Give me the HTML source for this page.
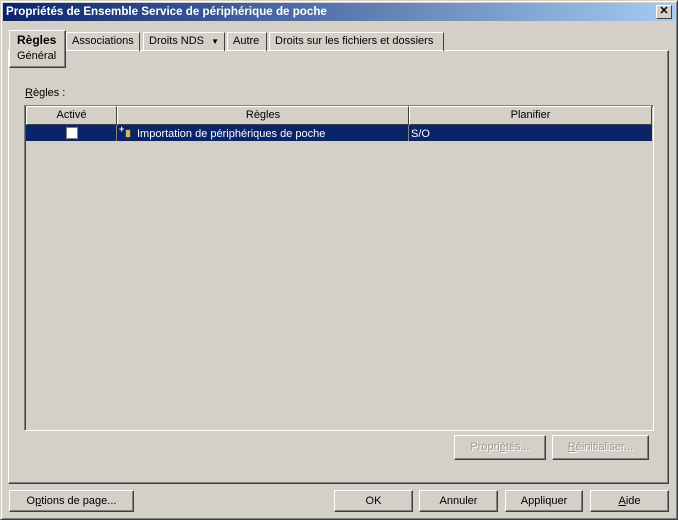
<!DOCTYPE html>
<html><head><meta charset="utf-8"><style>
*{margin:0;padding:0;box-sizing:border-box}
body{width:678px;height:520px;background:#d4d0c8;font-family:"Liberation Sans",sans-serif;font-size:11px;color:#000;position:relative;overflow:hidden}
.a{position:absolute}
.win{left:0;top:0;width:678px;height:520px;border:1px solid;border-color:#d4d0c8 #404040 #404040 #d4d0c8;box-shadow:inset 1px 1px #fff,inset -1px -1px #808080}
.title{left:3px;top:3px;width:672px;height:18px;background:linear-gradient(90deg,#0a246a,#a6caf0);color:#fff;font-weight:bold;font-size:11.6px;line-height:18px;padding-left:3px}
.x{left:656px;top:5px;width:16px;height:14px;background:#d4d0c8;border:1px solid;border-color:#fff #404040 #404040 #fff;font-size:11px;font-weight:bold;text-align:center;line-height:11px}
.btn{position:absolute;border:1px solid;border-color:#fff #404040 #404040 #fff;box-shadow:inset -1px -1px #808080;text-align:center;font-size:11px;line-height:20px}
.dis{color:#9a9890;text-shadow:1px 1px #fff}
.tab{position:absolute;top:32px;height:19px;border:1px solid;border-bottom:none;border-color:#fff #404040 #404040 #fff;line-height:17px;padding:0 5px;font-size:11px;white-space:nowrap}
.panel{left:8px;top:50px;width:661px;height:434px;border:1px solid;border-color:#fff #404040 #404040 #fff;box-shadow:inset -1px -1px #808080}
.list{left:24px;top:105px;width:630px;height:326px;background:#d4d0c8;border:1px solid;border-color:#808080 #fff #fff #808080;box-shadow:inset 1px 1px #404040}
.hd{position:absolute;top:106px;height:19px;border:1px solid;border-color:#fff #404040 #404040 #fff;text-align:center;line-height:17px}
u{text-decoration:underline}
</style></head><body>
<div class="a win"></div>
<div class="a title">Propriétés de Ensemble Service de périphérique de poche</div>
<div class="a x">✕</div>
<div class="a panel"></div>
<div class="tab" style="left:66px;width:74px">Associations</div>
<div class="tab" style="left:143px;width:82px">Droits NDS <span style="font-size:8px;margin-left:4px">▼</span></div>
<div class="tab" style="left:227px;width:40px">Autre</div>
<div class="tab" style="left:269px;width:175px">Droits sur les fichiers et dossiers</div>
<div class="a" style="left:9px;top:30px;width:57px;height:38px;background:#d4d0c8;border:1px solid;border-color:#fff #404040 #404040 #fff;box-shadow:inset -1px -1px #808080;padding:2px 0 0 7px;line-height:15px"><b style="font-size:12px">Règles</b><br>Général</div>
<div class="a" style="left:25px;top:87px"><u>R</u>ègles :</div>
<div class="a list"></div>
<div class="hd" style="left:26px;width:91px">Activé</div>
<div class="hd" style="left:117px;width:292px">Règles</div>
<div class="hd" style="left:409px;width:243px">Planifier</div>
<div class="a" style="left:26px;top:125px;width:626px;height:16px;background:#0a246a"></div>
<div class="a" style="left:116px;top:125px;width:1px;height:16px;background:#808080"></div>
<div class="a" style="left:408px;top:125px;width:1px;height:16px;background:#808080"></div>
<div class="a" style="left:66px;top:127px;width:12px;height:12px;background:#fff;border:1px solid #808080"></div>
<div class="a" style="left:119px;top:124px;color:#fff;font-size:9px;font-weight:bold">+</div>
<div class="a" style="left:125px;top:129px;width:6px;height:9px;background:#c8b870;border:1px solid #404020"></div>
<div class="a" style="left:137px;top:128px;color:#fff">Importation de périphériques de poche</div>
<div class="a" style="left:411px;top:128px;color:#fff">S/O</div>
<div class="btn dis" style="left:454px;top:435px;width:92px;height:25px;line-height:23px">Propri<u>é</u>tés...</div>
<div class="btn dis" style="left:552px;top:435px;width:97px;height:25px;line-height:23px"><u>R</u>éinitialiser...</div>
<div class="btn" style="left:9px;top:490px;width:125px;height:22px">O<u>p</u>tions de page...</div>
<div class="btn" style="left:334px;top:490px;width:79px;height:22px">OK</div>
<div class="btn" style="left:419px;top:490px;width:79px;height:22px">Annuler</div>
<div class="btn" style="left:505px;top:490px;width:78px;height:22px">Appliquer</div>
<div class="btn" style="left:590px;top:490px;width:79px;height:22px"><u>A</u>ide</div>
</body></html>
